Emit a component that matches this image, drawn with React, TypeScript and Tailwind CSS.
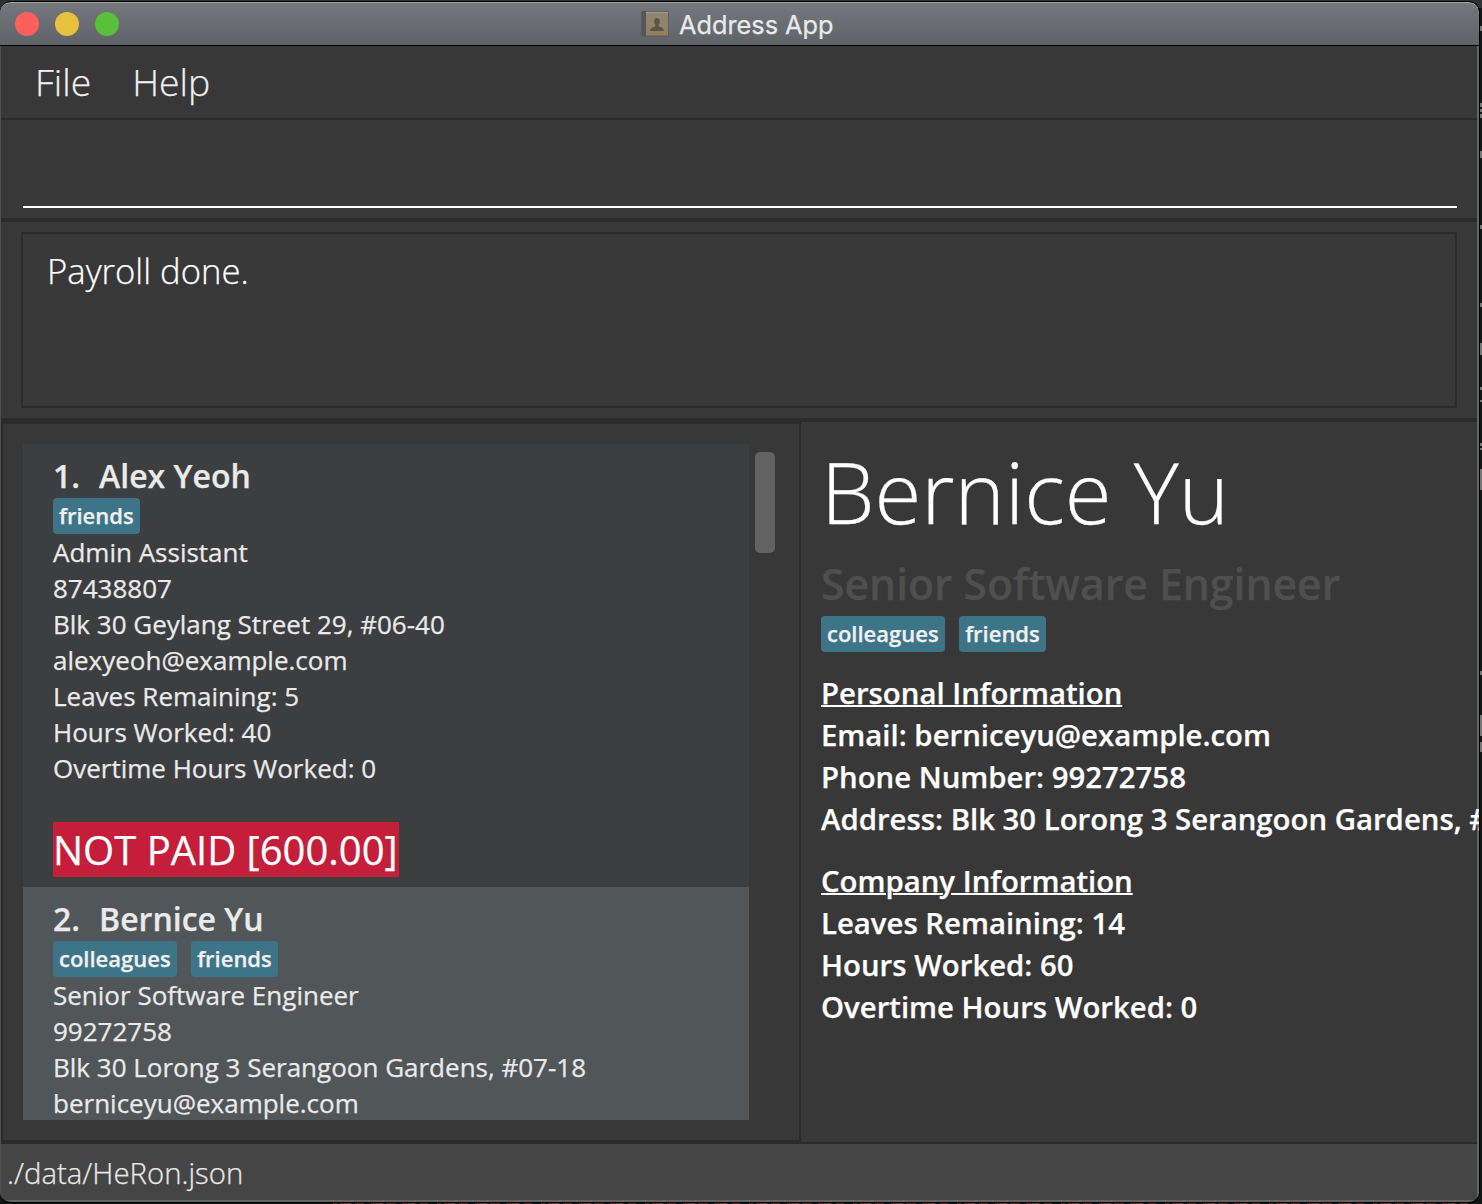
import React from "react";

type Person = { index: number; name: string; tags: string[]; lines: string[] };

const people: Person[] = [
  {
    index: 1,
    name: "Alex Yeoh",
    tags: ["friends"],
    lines: [
      "Admin Assistant",
      "87438807",
      "Blk 30 Geylang Street 29, #06-40",
      "alexyeoh@example.com",
      "Leaves Remaining: 5",
      "Hours Worked: 40",
      "Overtime Hours Worked: 0",
    ],
  },
  {
    index: 2,
    name: "Bernice Yu",
    tags: ["colleagues", "friends"],
    lines: [
      "Senior Software Engineer",
      "99272758",
      "Blk 30 Lorong 3 Serangoon Gardens, #07-18",
      "berniceyu@example.com",
    ],
  },
];

function Tags({ tags }: { tags: string[] }) {
  return (
    <div className="flex gap-[14px]">
      {tags.map((t) => (
        <span
          key={t}
          className="h-9 rounded-[4px] bg-[#3e7488] pr-[6.500px] pl-1.5 text-[22px] leading-[34px] font-semibold text-[#f0f0f0]"
        >
          {t}
        </span>
      ))}
    </div>
  );
}

function Cell({ person }: { person: Person }) {
  return (
    <>
      <div className="flex h-11 gap-[19px] text-[32px] leading-[44px] font-semibold text-[#eaeaea]">
        <span>{person.index}.</span>
        <span>{person.name}</span>
      </div>
      <Tags tags={person.tags} />
      <div className="text-[26px] leading-9 text-[#eaeaea]">
        {person.lines.map((l) => (
          <div key={l}>{l}</div>
        ))}
      </div>
    </>
  );
}

function BookIcon() {
  return (
    <svg width="28" height="26" viewBox="0 0 28 26">
      <defs>
        <linearGradient id="cover" x1="0" y1="0" x2="0" y2="1">
          <stop offset="0" stopColor="#8f8675" />
          <stop offset="1" stopColor="#93805b" />
        </linearGradient>
      </defs>
      <rect x="0" y="0" width="28" height="26" rx="1.5" fill="#5f5e5e" />
      <rect x="1" y="0" width="3.5" height="25" fill="#555557" />
      <rect x="5" y="1" width="22" height="23.5" fill="url(#cover)" />
      <rect x="5" y="1" width="22" height="1" fill="#a39f95" />
      <path
        d="M16 7c-2 0-3 1.400-3 3.300 0 1.500.600 2.700 1.400 3.500v1.400c-1.600.900-5 1-5.400 4.800h14c-.4-3.800-3.800-3.900-5.400-4.800v-1.400c.8-.8 1.400-2 1.400-3.500C19 8.400 18 7 16 7z"
        fill="#5c5649"
      />
    </svg>
  );
}

/* Slivers of the desktop that show past the window's right and bottom edges. */
function Backdrop() {
  const marks = [
    [26, 5], [103, 4], [109, 3], [114, 4], [151, 7], [225, 4], [303, 4], [343, 12], [387, 3],
    [400, 2], [443, 3], [448, 2], [469, 21], [671, 4], [715, 21], [742, 10],
  ];
  return (
    <svg className="absolute inset-0" width="1482" height="1204">
      <rect x="0" y="0" width="1482" height="8" fill="#303333" />
      {marks.map(([y, h]) => (
        <rect key={y} x="1480" y={y} width="2" height={h} fill="#777777" />
      ))}
      <path
        d="M333 1203.500H1476"
        stroke="#6e2b2c"
        strokeWidth="1"
        strokeDasharray="4 3 11 4 9 7 12 3 10 6 13 5 8 9"
      />
    </svg>
  );
}

export default function App() {
  return (
    <div className="relative flex h-[1204px] w-[1482px] flex-col overflow-hidden bg-[#141515] pt-px font-['Open_Sans',sans-serif] whitespace-nowrap [-webkit-text-stroke:0.25px]">
      <Backdrop />
      <div className="relative flex h-[1202px] w-[1480px] flex-col overflow-hidden rounded-[11px] border-t border-r border-b border-black bg-[#383838]">
        <header className="flex h-11 shrink-0 items-center rounded-t-[10px] border-t border-b border-t-[#a3a5a7] border-b-black bg-linear-to-b from-[#75777c] to-[#5f6366] pl-[15px]">
          <div className="flex w-[626px] gap-4">
            <span className="size-6 rounded-full bg-[#ff5f5a]" />
            <span className="size-6 rounded-full bg-[#e6c03f]" />
            <span className="size-6 rounded-full bg-[#58c03a]" />
          </div>
          <BookIcon />
          <span className="mt-px ml-[10px] font-['Inter',sans-serif] text-[25.300px] leading-[40px] text-[#e8eaeb]">
            Address App
          </span>
        </header>

        <div className="flex min-h-0 flex-1 flex-col border-r-2 border-b-2 border-l border-[#646464] border-l-[#505050]">
          <nav className="flex h-[74px] shrink-0 gap-[41px] border-b-2 border-[#2b2b2b] pl-[34px] text-[37.330px] leading-[71px] font-light text-[#f0f0f0]">
            <span>File</span>
            <span>Help</span>
          </nav>

          <div className="h-[102px] shrink-0 border-b-4 border-[#2b2b2b] px-[22px] pr-5 pt-[86px]">
            <div className="h-0.5 bg-white" />
          </div>

          <div className="h-[200px] shrink-0 border-b-4 border-[#2b2b2b] py-2.5 pr-5 pl-5">
            <div className="h-44 border-2 border-[#2b2b2b] pt-[13px] pl-6 text-[34.670px] leading-[48px] font-light text-white">
              Payroll done.
            </div>
          </div>

          <main className="flex h-[722px] shrink-0 border-b-2 border-[#2b2b2b]">
            <section className="flex w-[800px] shrink-0 border-2 border-[#2b2b2b] pt-5 pl-5">
              <div className="h-[676px] w-[726px] overflow-hidden">
                <article className="h-[443px] bg-[#3c3e3f] px-[30px] pt-2.5">
                  <Cell person={people[0]} />
                  <div className="mt-9 inline-block h-[55px] w-[346px] bg-[#c41e3a] text-[40px] leading-[55px] text-white">
                    NOT PAID [600.00]
                  </div>
                </article>
                <article className="h-[233px] bg-[#515658] px-[30px] pt-2.5">
                  <Cell person={people[1]} />
                </article>
              </div>
              <div className="mt-2 ml-1.5 h-[101px] w-5 rounded-[5px] bg-[#626262]" />
            </section>

            <section className="min-w-0 flex-1 pt-[9px] pl-5">
              <h1 className="h-[122px] text-[85.330px] leading-[120px] font-light text-white">Bernice Yu</h1>
              <h2 className="h-[63px] text-[42.670px] leading-[61px] font-semibold text-[#4f4f4f]">
                Senior Software Engineer
              </h2>
              <Tags tags={["colleagues", "friends"]} />
              <div className="mt-5 text-[29.330px] leading-[42px] font-semibold text-white">
                <div className="underline decoration-2">Personal Information</div>
                <div>Email: berniceyu@example.com</div>
                <div>Phone Number: 99272758</div>
                <div>Address: Blk 30 Lorong 3 Serangoon Gardens, #07-18</div>
              </div>
              <div className="mt-5 text-[29.330px] leading-[42px] font-semibold text-white">
                <div className="underline decoration-2">Company Information</div>
                <div>Leaves Remaining: 14</div>
                <div>Hours Worked: 60</div>
                <div>Overtime Hours Worked: 0</div>
              </div>
            </section>
          </main>

          <footer className="min-h-0 flex-1 bg-[#454545] pl-1.5 text-[29.330px] leading-[58px] font-light text-[#eaeaea]">
            ./data/HeRon.json
          </footer>
        </div>
      </div>
    </div>
  );
}
